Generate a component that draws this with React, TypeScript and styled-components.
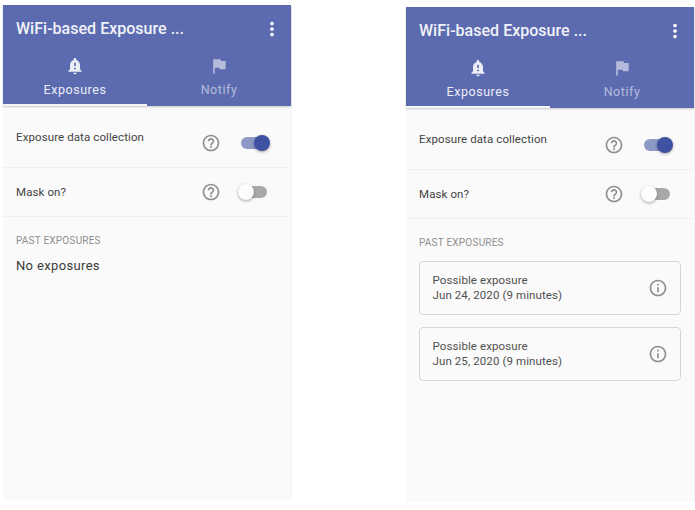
import React from 'react'
import styled, { createGlobalStyle } from 'styled-components'
import { MdFlag, MdHelpOutline, MdInfoOutline, MdMoreVert, MdNotificationImportant } from 'react-icons/md'

const GlobalStyle = createGlobalStyle`
  html, body {
    margin: 0;
    padding: 0;
    background: #fff;
    font-family: Roboto, "Liberation Sans", sans-serif;
  }
`

const Page = styled.div`
  display: flex;
  width: 695px;
  height: 510px;
  padding-left: 3px;
  gap: 115px;
  box-sizing: border-box;
  overflow: hidden;
`

const Phone = styled.div<{ $top: number }>`
  width: 288px;
  height: 495px;
  margin-top: ${p => p.$top}px;
  display: flex;
  flex-direction: column;
  flex-shrink: 0;
  background: #fafafa;
  box-shadow: 1px 0 0 #f3f3f3;
`

const AppBar = styled.header`
  background: #5c6bb0;
  color: #fff;
  box-shadow: 0 1px 2px rgba(0, 0, 0, 0.2);
`

const Toolbar = styled.div`
  height: 47px;
  padding: 0 8px 0 13px;
  display: flex;
  align-items: center;
  justify-content: space-between;
`

const Title = styled.h1`
  margin: 0;
  font-size: 16px;
  font-weight: 500;
  letter-spacing: 0.02px;
  color: #f1f2f8;
`

const MenuIcon = styled(MdMoreVert)`
  font-size: 22px;
`

const Tabs = styled.nav`
  display: flex;
  height: 54px;
`

const Tab = styled.div<{ $active?: boolean }>`
  display: flex;
  flex-direction: column;
  align-items: center;
  width: ${p => (p.$active ? 144 : 144)}px;
  padding-top: 4px;
  box-sizing: border-box;
  border-bottom: 2px solid ${p => (p.$active ? '#f4f5fa' : 'transparent')};
  color: ${p => (p.$active ? '#eceef6' : '#b4bbdb')};
`

const TabIcon = styled.span`
  height: 20px;
  font-size: 20px;
  line-height: 20px;
  svg { display: block; }
`

const TabLabel = styled.span`
  margin-top: 6px;
  font-size: 12.5px;
  line-height: 16px;
  letter-spacing: 0.55px;
`

const SettingRow = styled.div<{ $tall?: boolean }>`
  height: ${p => (p.$tall ? 61 : 48)}px;
  padding: 0 24px 0 13px;
  display: flex;
  align-items: ${p => (p.$tall ? 'flex-start' : 'center')};
  border-bottom: 1px solid #f0f0f0;
`

const SettingLabel = styled.span<{ $tall?: boolean }>`
  flex: 1;
  margin-top: ${p => (p.$tall ? 23 : 0)}px;
  font-size: 11.5px;
  line-height: 16px;
  letter-spacing: 0.1px;
  color: #444;
`

const SettingControls = styled.div<{ $tall?: boolean }>`
  display: flex;
  align-items: center;
  gap: 20px;
  margin-top: ${p => (p.$tall ? 27 : 0)}px;
`

const HelpIcon = styled(MdHelpOutline)`
  font-size: 20px;
  color: #8f8f8f;
  display: block;
`

const Switch = styled.span<{ $on?: boolean }>`
  position: relative;
  display: block;
  width: 26px;
  height: 12px;
  border-radius: 6px;
  background: ${p => (p.$on ? '#8e99c6' : '#a8a8a8')};
`

const Thumb = styled.span<{ $on?: boolean }>`
  position: absolute;
  top: -2px;
  ${p => (p.$on ? 'right: -3px;' : 'left: -3px;')}
  width: 16px;
  height: 16px;
  border-radius: 50%;
  background: ${p => (p.$on ? '#3f51a3' : '#fdfdfd')};
  box-shadow: 0 1px 3px rgba(0, 0, 0, 0.35);
`

const Section = styled.section`
  padding: 17px 13px 0;
`

const SectionLabel = styled.h2`
  margin: 0;
  font-size: 10px;
  font-weight: 400;
  line-height: 14px;
  letter-spacing: 0.22px;
  color: #8f8f8f;
`

const EmptyText = styled.p`
  margin: 9px 0 0;
  font-size: 13px;
  line-height: 18px;
  letter-spacing: 0.35px;
  color: #3a3a3a;
`

const CardList = styled.div`
  display: flex;
  flex-direction: column;
  gap: 12px;
  margin-top: 11px;
`

const Card = styled.div`
  height: 54px;
  padding: 0 12px 0 12.5px;
  display: flex;
  align-items: center;
  justify-content: space-between;
  box-sizing: border-box;
  border: 1px solid #d6d6d6;
  border-radius: 4px;
`

const CardText = styled.div`
  font-size: 11.5px;
  line-height: 15px;
  letter-spacing: 0.1px;
  color: #505050;
`

const InfoIcon = styled(MdInfoOutline)`
  font-size: 20px;
  color: #8f8f8f;
  display: block;
`

const Setting: React.FC<{ label: string; on?: boolean; tall?: boolean }> = ({ label, on, tall }) => (
    <SettingRow $tall={tall}>
        <SettingLabel $tall={tall}>{label}</SettingLabel>
        <SettingControls $tall={tall}>
            <HelpIcon />
            <Switch $on={on}>
                <Thumb $on={on} />
            </Switch>
        </SettingControls>
    </SettingRow>
)

const Screen: React.FC<{ top: number; children: React.ReactNode }> = ({ top, children }) => (
    <Phone $top={top}>
        <AppBar>
            <Toolbar>
                <Title>WiFi-based Exposure ...</Title>
                <MenuIcon />
            </Toolbar>
            <Tabs>
                <Tab $active>
                    <TabIcon><MdNotificationImportant /></TabIcon>
                    <TabLabel>Exposures</TabLabel>
                </Tab>
                <Tab>
                    <TabIcon><MdFlag /></TabIcon>
                    <TabLabel>Notify</TabLabel>
                </Tab>
            </Tabs>
        </AppBar>
        <Setting label="Exposure data collection" on tall />
        <Setting label="Mask on?" />
        <Section>
            <SectionLabel>PAST EXPOSURES</SectionLabel>
            {children}
        </Section>
    </Phone>
)

const exposures = ['Jun 24, 2020 (9 minutes)', 'Jun 25, 2020 (9 minutes)']

export default function App() {
    return (
        <Page>
            <GlobalStyle />
            <Screen top={5}>
                <EmptyText>No exposures</EmptyText>
            </Screen>
            <Screen top={7}>
                <CardList>
                    {exposures.map(when => (
                        <Card key={when}>
                            <CardText>
                                Possible exposure
                                <br />
                                {when}
                            </CardText>
                            <InfoIcon />
                        </Card>
                    ))}
                </CardList>
            </Screen>
        </Page>
    )
}
